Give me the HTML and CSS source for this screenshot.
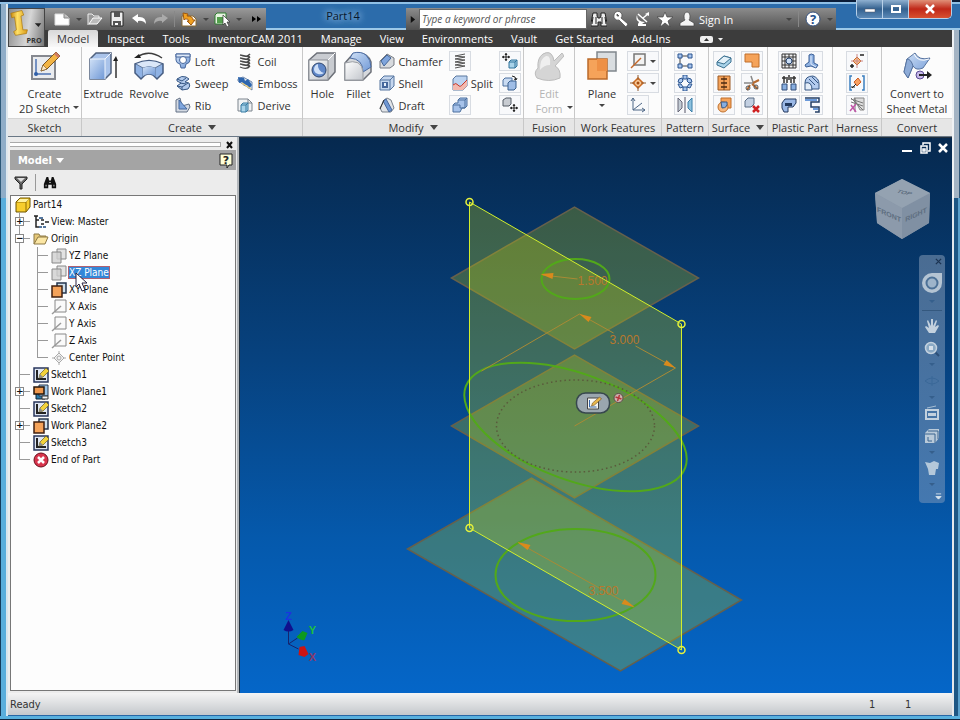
FILE: index.html
```html
<!DOCTYPE html>
<html lang="en">
<head>
<meta charset="utf-8">
<title>Part14</title>
<link rel="stylesheet" href="styles.css">
</head>
<body>
<svg class="defs" aria-hidden="true">
  <defs>
    <linearGradient id="blueFace" x1="0" y1="0" x2="1" y2="1"><stop offset="0" stop-color="#cfe0f6"/><stop offset="1" stop-color="#6f98d6"/></linearGradient>
    <linearGradient id="greyFace" x1="0" y1="0" x2="1" y2="1"><stop offset="0" stop-color="#ffffff"/><stop offset="1" stop-color="#c2c6cc"/></linearGradient>
    <linearGradient id="gold" x1="0" y1="0" x2="1" y2="0"><stop offset="0" stop-color="#c98a10"/><stop offset=".4" stop-color="#ffe066"/><stop offset="1" stop-color="#d99a18"/></linearGradient>

    <symbol id="sketch" viewBox="0 0 30 30"><path d="M2 5h23v23H2z" fill="#e9ebee" stroke="#85888f" stroke-width="2"/><path d="M6 8v15h15" fill="none" stroke="#4d74b4" stroke-width="1.5"/><circle cx="6" cy="23" r="2" fill="#2f5fa8"/><path d="M11 20l2-6L26 1l4 4-13 13z" fill="#f2b444" stroke="#7a5420"/><path d="M11 20l2-6 4 4z" fill="#fbe7c4" stroke="#7a5420" stroke-width=".6"/><path d="M24 3l2-2 4 4-2 2z" fill="#cf7a62"/></symbol>
    <symbol id="extrude" viewBox="0 0 30 30"><path d="M2 8l6-6h15v20l-6 6H2z" fill="#a9c3ea" stroke="#50617e" stroke-width="1.5"/><path d="M2 8h15v20H2z" fill="url(#blueFace)"/><path d="M2 8h15v20M17 8l6-6" fill="none" stroke="#eff5fd"/><path d="M28 27V9" stroke="#333" stroke-width="1.5"/><path d="M25 10l3-5 2 5z" fill="#222"/></symbol>
    <symbol id="revolve" viewBox="0 0 30 30"><path d="M3 6Q15-2 28 7" fill="none" stroke="#3c3c3c" stroke-width="1.500"/><path d="M0 7l5-4 2 4z" fill="#222"/><path d="M1 13q14-7 28 0v9l-6 6-4-4q-4-2-8 0l-4 4-6-6z" fill="#8fb2e4" stroke="#465c80" stroke-width="1.500"/><path d="M2 13q13-6 26 0l-7 4q-6-3-12 0z" fill="#dbe7f8"/><path d="M2 13l7 4q6-3 12 0l7-4M9 17v8M21 17v8" fill="none" stroke="#5f7699"/><path d="M9 17q6-3 12 0v8q-6-4-12 0z" fill="url(#blueFace)"/></symbol>
    <symbol id="hole" viewBox="0 0 30 30"><path d="M2 9l8-7h18v19l-7 8H2z" fill="#c9ccd1" stroke="#6c7078" stroke-width="1.5"/><path d="M2 9h19v20H2z" fill="url(#greyFace)" stroke="#8b8f96"/><path d="M21 9l7-7" stroke="#fff"/><circle cx="12" cy="19" r="7" fill="#5f87c8" stroke="#2f466e"/><path d="M7 18a6 5 0 0 0 10 4a8 8 0 0 1-6-9a6 6 0 0 0-4 5" fill="#cfe0f8"/></symbol>
    <symbol id="fillet" viewBox="0 0 30 30"><path d="M2 12L10 3q14-3 18 8v10l-8 8H2z" fill="#d6d9dd" stroke="#6c7078" stroke-width="1.5"/><path d="M10 2q8-2 13 2 5 5 5 12l-8 5q0-13-13-14z" fill="url(#blueFace)" stroke="#4a6ba3"/><path d="M2 12q17-5 18 9v8H2z" fill="url(#greyFace)" stroke="#9a9ea4"/></symbol>
    <symbol id="form" viewBox="0 0 30 30"><path d="M3 27q-4-5 1-10Q3 7 9 3q7-4 10 3l1 4 8-8 2 3-9 10q6 3 5 12-11 5-23 0z" fill="#d5d5d5" stroke="#bcbcbc"/><path d="M6 19q0-12 6-14 5-1 4 9-6 0-10 5" fill="#efefef"/></symbol>
    <symbol id="plane" viewBox="0 0 30 30"><path d="M10 1h19v19H10z" fill="#d9dde0" stroke="#80868c" stroke-width="1.5"/><path d="M1 8h19v20H1z" fill="#f5a35a" stroke="#b9692a" stroke-width="1.5"/><path d="M10 8h10v12H10z" fill="#ee9045"/></symbol>
    <symbol id="convert" viewBox="0 0 30 30"><path d="M2 21L5 8l8-6q4 8 15 5l-7 10q-7 3-10-2l-5 12z" fill="url(#blueFace)" stroke="#5874a0"/><path d="M2 21L5 8q4 0 6 7L6 27z" fill="#8eacd8" stroke="#5874a0"/><path d="M12 3q4 9 15 5" stroke="#fff" fill="none"/><circle cx="18" cy="24" r="4" fill="#c6b8e8" stroke="#5b4b94"/><path d="M17 24h9" stroke="#222" stroke-width="2"/><path d="M25 20l5 4-5 4z" fill="#222"/></symbol>

    <symbol id="loft" viewBox="0 0 16 16"><path d="M1 1h14v6q0 3-4 4l-1 4H6l-1-4Q1 10 1 7z" fill="url(#blueFace)" stroke="#46679c"/><path d="M1 1h14v3H1z" fill="#dce8f8" stroke="#46679c"/><circle cx="8" cy="7" r="3.500" fill="#fff" stroke="#46679c"/></symbol>
    <symbol id="sweep" viewBox="0 0 16 16"><path d="M2 4q5-4 9-2l3 2-4 3 4 1q2 3-1 6l-6 1-5-4 4-3-4-2z" fill="#b2caec" stroke="#365784"/><path d="M2 4l5 2 4-3M2 11l5 1 6-4M7 12v3M5 8l6 1" fill="none" stroke="#365784"/></symbol>
    <symbol id="rib" viewBox="0 0 16 16"><path d="M1 3l4-2 2 8 7-2 1 3-3 5H1z" fill="#d3d9e2" stroke="#627085"/><path d="M4 3v9h8z" fill="#7fa6de" stroke="#44699f"/></symbol>
    <symbol id="coil" viewBox="0 0 16 16"><path d="M3 2q7 3 10-1M3 5q7 3 10-1M3 8q7 3 10-1M3 11q7 3 10-1M3 14q7 3 10-1M3 2l10 2M3 5l10 2M3 8l10 2M3 11l10 2" fill="none" stroke="#4a4a4a" stroke-width="1.300"/></symbol>
    <symbol id="emboss" viewBox="0 0 16 16"><path d="M1 4l5-2 9 5v8L1 6z" fill="#dde7f4" stroke="#7088aa"/><path d="M1 2l6 1 1 3 3-2 4 6-3 4-2-4-3 1-2-4-3 1z" fill="#2e66ae"/><path d="M5 8l9 6" stroke="#f0d07c" stroke-width="1.500"/></symbol>
    <symbol id="derive" viewBox="0 0 16 16"><path d="M1 2h10l4 4v8H1z" fill="#f0f2f4" stroke="#7d858e"/><path d="M11 2v4h4" fill="none" stroke="#7d858e"/><path d="M4 8l2-2h5v7l-2 2H4z" fill="#a9d3ea" stroke="#377ba2"/><path d="M4 8h5v7M9 8l2-2" fill="none" stroke="#377ba2"/></symbol>
    <symbol id="chamfer" viewBox="0 0 16 16"><path d="M1 8l7-7 7 4v7l-4 3H1z" fill="#d7dade" stroke="#767b83"/><path d="M2 8l6-6 4 3-7 8z" fill="#7ea4dc" stroke="#446699"/></symbol>
    <symbol id="shell" viewBox="0 0 16 16"><path d="M1 5l4-4h10v10l-4 4H1z" fill="#c5d6ee" stroke="#55759f"/><path d="M1 5h10v10M11 5l4-4" fill="none" stroke="#55759f"/><path d="M3 7h6v6H3z" fill="#46679c"/><path d="M5 8h2v3H5z" fill="#e7f0fb"/></symbol>
    <symbol id="draft" viewBox="0 0 16 16"><path d="M1 11l4-8 3-2 4 2 3 8-3 4H3z" fill="#e1e4e8" stroke="#79818b"/><path d="M4 4l3-2 6 11-3 2z" fill="#7098d4" stroke="#46679c"/><path d="M1 12l4-9" stroke="#333"/></symbol>
    <symbol id="thread" viewBox="0 0 16 16"><path d="M3 3l10-2M3 6l10-2M3 9l10-2M3 12l10-2M3 15l10-2M3 3l10 1M3 6l10 1M3 9l10 1M3 12l10 1" fill="none" stroke="#555"/></symbol>
    <symbol id="split" viewBox="0 0 16 16"><path d="M1 4l3-3h11v10l-4 4H1z" fill="#bcd3f0" stroke="#5a789f"/><path d="M1 10q3-3 5 0t5-1l4-4v6l-4 4H1z" fill="#f4b9ae"/><path d="M1 10q3-3 5 0t5-1l4-4" fill="none" stroke="#c5392c"/></symbol>
    <symbol id="combine" viewBox="0 0 16 16"><path d="M6 3l2-2h7v8l-2 2h-3l-2 4H1V8l2-2h3z" fill="#a6c2ea" stroke="#4c709f"/><path d="M6 3h7v8H8V8H1M13 3l2-2" fill="none" stroke="#4c709f"/></symbol>
    <symbol id="movebody" viewBox="0 0 16 16"><path d="M4 0v8M0 4h8" stroke="#222"/><path d="M2.500 2L4 0l1.500 2zM2.500 6L4 8l1.500-2zM2 2.500L0 4l2 1.500zM6 2.500L8 4 6 5.500z" fill="#222"/><path d="M7 9l2-2h6v6l-2 2H7z" fill="#a9d3ea" stroke="#32749c"/><path d="M7 9h6v6M13 9l2-2" fill="none" stroke="#32749c"/></symbol>
    <symbol id="copybody" viewBox="0 0 16 16"><path d="M1 5l2-2h7v8H1z" fill="#c9dbf2" stroke="#4c709f"/><path d="M6 8l2-2h6v7l-2 2H6z" fill="#9fbde6" stroke="#3a608f"/><path d="M10 1q4 0 4 4l-2-1M14 5l1-2" fill="none" stroke="#222"/></symbol>
    <symbol id="movepart" viewBox="0 0 16 16"><path d="M1 3l3-2h5v6L7 9H1z" fill="#c8ccd2" stroke="#555c66"/><path d="M12 7v8M8 11h8" stroke="#222"/><path d="M10.500 9L12 7l1.500 2zM10.500 13l1.500 2 1.500-2zM10 9.500L8 11l2 1.500zM14 9.500l2 1.500-2 1.500z" fill="#222"/></symbol>

    <symbol id="axis" viewBox="0 0 16 16"><path d="M4 1h11v11H4z" fill="#f2f2f2" stroke="#777" stroke-width="1.500"/><path d="M1 15L11 5" stroke="#c4682a" stroke-width="1.500"/></symbol>
    <symbol id="point" viewBox="0 0 16 16"><path d="M8 3l5 5-5 5-5-5z" fill="#f9c896" stroke="#cc6b22" stroke-width="1.500"/><path d="M8 0v5M8 11v5M0 8h5M11 8h5" stroke="#8f5a30"/><circle cx="8" cy="8" r="1.500" fill="#a44c10"/></symbol>
    <symbol id="ucs" viewBox="0 0 16 16"><path d="M3 1v12h12M3 13l9-7" fill="none" stroke="#4d6686"/><path d="M1 4l2-3 2 3M12 11l3 2-3 2" fill="none" stroke="#4d6686"/></symbol>
    <symbol id="rect" viewBox="0 0 16 16"><path d="M5 3h6M5 13h6M3 5v6" stroke="#444"/><path d="M1 1h4v4H1zM11 1h4v4h-4zM1 11h4v4H1zM11 11h4v4h-4z" fill="#a9c6ee" stroke="#2b5590"/></symbol>
    <symbol id="circ" viewBox="0 0 16 16"><g fill="#a9c6ee" stroke="#2b5590"><path d="M6 0h4v4H6zM11 3l3 1 1 3-3 1-2-2zM2 4l3-1 1 3-2 2-3-1zM1 9l3 0 2 3-3 1zM15 9l-3 0-2 3 3 1zM6 12h4v4H6z"/></g></symbol>
    <symbol id="mirror" viewBox="0 0 16 16"><path d="M1 1l4 4v6l-4 4z" fill="#c3ccd5" stroke="#667"/><path d="M15 1l-4 4v6l4 4z" fill="#8ec1de" stroke="#3a7fa8"/><path d="M8 0v16" stroke="#556"/></symbol>
    <symbol id="thicken" viewBox="0 0 16 16"><path d="M1 9l7-6 7 2v4l-7 6-7-3z" fill="#a9d3ea" stroke="#3b7191"/><path d="M1 9l7-6 7 2-7 6z" fill="#e3f1f9" stroke="#3b7191"/></symbol>
    <symbol id="patch" viewBox="0 0 16 16"><path d="M1 1h14v13H8V9H1z" fill="#f5a35a" stroke="#c06f2a"/></symbol>
    <symbol id="stitch" viewBox="0 0 16 16"><path d="M2 1h12v14H2z" fill="#f5a35a" stroke="#9c5a24"/><path d="M8 1v14" stroke="#7a3f12"/><path d="M5 4h6M5 8h6M5 12h6" stroke="#4a2a12" stroke-width="1.500"/></symbol>
    <symbol id="trim" viewBox="0 0 16 16"><path d="M0 8h9M7 1l3 9" stroke="#888" stroke-width="1.500"/><path d="M9 8l6-3M8 9l6 5M6 10l-3 5" stroke="#b66a30" stroke-width="2"/><circle cx="12" cy="12" r="2" fill="none" stroke="#555"/><circle cx="4" cy="13" r="2" fill="none" stroke="#555"/></symbol>
    <symbol id="sculpt" viewBox="0 0 16 16"><path d="M5 1h10v10H5z" fill="#f5a35a" stroke="#c06f2a"/><circle cx="7" cy="10" r="5" fill="#f7b87e" stroke="#c0702a"/><path d="M5 5h6q1 6-5 6z" fill="#87aee0" stroke="#365784"/></symbol>
    <symbol id="delface" viewBox="0 0 16 16"><path d="M1 4l3-3h6v6l-3 3H1z" fill="#c3d0e2" stroke="#5b6c84"/><path d="M9 9l6 6M15 9l-6 6" stroke="#cf2121" stroke-width="2.500"/></symbol>
    <symbol id="grill" viewBox="0 0 16 16"><path d="M1 1h14v14H1z" fill="#f2f2f2" stroke="#333"/><path d="M4 1v14M8 1v14M12 1v14M1 4h14M1 8h14M1 12h14" stroke="#333"/><circle cx="8" cy="8" r="3" fill="#cde0f6" stroke="#233e68"/></symbol>
    <symbol id="boss" viewBox="0 0 16 16"><path d="M5 2q2-2 5 0v8l4 2-2 3-5-2-5 1-1-2 4-3z" fill="#8fb2e2" stroke="#3a5f96"/><path d="M7 3v8l5 3" fill="none" stroke="#dfeafa"/></symbol>
    <symbol id="snap" viewBox="0 0 16 16"><path d="M1 9h5v6H1zM10 9h5v6h-5z" fill="#87aee0" stroke="#334f7b"/><path d="M3 1v7M6 2v6M10 2v6M13 1v7M1 3h4M11 3h4M8 0v5" stroke="#333" stroke-width="1.500"/></symbol>
    <symbol id="rest" viewBox="0 0 16 16"><path d="M1 8q0-7 8-7 6 2 6 8v5H7z" fill="#b3cbee" stroke="#365784"/><path d="M1 8q7-2 7 7H1zM5 4l6 6M8 2l6 6" fill="#e4edf8" stroke="#365784"/></symbol>
    <symbol id="rulefillet" viewBox="0 0 16 16"><path d="M1 6l3-4h11v4l-3 4H7v5H3L1 11z" fill="#9ab8e6" stroke="#22395e"/><path d="M4 6h7v3H4z" fill="#22395e"/></symbol>
    <symbol id="lip" viewBox="0 0 16 16"><path d="M1 1h14v4H7v5h8v5h-4" fill="none" stroke="#243f66" stroke-width="1.500"/><path d="M1 3h12M9 12h5" stroke="#6b9ada" stroke-width="2"/></symbol>
    <symbol id="pin1" viewBox="0 0 16 16"><path d="M8 4l4 4-4 4-4-4z" fill="#f9c08c" stroke="#cc6b22"/><path d="M8 1v14M2 8h12" stroke="#c88"/><path d="M11 2h4M1 13h4M3 11v4" stroke="#222" stroke-width="1.500"/></symbol>
    <symbol id="pin2" viewBox="0 0 16 16"><path d="M3 1H1v14h2M13 1h2v14h-2" fill="none" stroke="#3a7fc0" stroke-width="1.500"/><path d="M9 3l3 4-4 4-3-4z" fill="#f9a060" stroke="#cc5b22"/><path d="M3 13l4-4M2 12h4" stroke="#222"/></symbol>
    <symbol id="pin3" viewBox="0 0 16 16"><path d="M5 1h10v12h-4z" fill="#ddd" stroke="#888"/><path d="M2 2l12 4M2 5l12 4M2 1l12 12M6 1v14" stroke="#777"/><path d="M1 14l6-7M2 8l5 7" stroke="#c057a8" stroke-width="1.500"/></symbol>

    <symbol id="new" viewBox="0 0 16 16"><path d="M1 3h9l5 4v7H1z" fill="#fff" stroke="#ddd"/><path d="M10 3v4h5" fill="#bbb" stroke="#888"/></symbol>
    <symbol id="open" viewBox="0 0 16 16"><path d="M1 14V3h4l2 2h5v2" fill="#999" stroke="#eee"/><path d="M2 13L6 7h9l-5 6z" fill="#bbb" stroke="#fff"/></symbol>
    <symbol id="save" viewBox="0 0 16 16"><path d="M2 1h12v14H2z" fill="#eee" stroke="#222"/><path d="M5 1h6v5H5zM4 10h8v5H4z" fill="#555"/><path d="M6 12h3v2H6z" fill="#fff"/></symbol>
    <symbol id="undo" viewBox="0 0 16 16"><path d="M1 7l6-4v3q8-1 8 7-3-4-8-3v2z"/></symbol>
    <symbol id="redo" viewBox="0 0 16 16"><path d="M15 7L9 3v3Q1 5 1 13q3-4 8-3v2z"/></symbol>
    <symbol id="ret" viewBox="0 0 16 16"><path d="M1 5h11l3 3v7H1z" fill="#fff" stroke="#8a6a30"/><path d="M2 2l5 1-1 2q6 0 6 4l2 0-4 5-4-4h2q-1-3-4-2L3 9z" fill="#f0a020" stroke="#a05a10"/></symbol>
    <symbol id="sel" viewBox="0 0 16 16"><path d="M1 4l2-2h9v9l-2 2H1z" fill="#e6f4e0" stroke="#2f7c30"/><path d="M3 6h6v6H3z" fill="#53a04c"/><path d="M9 4v10l2-2 2 4 2-1-2-4h3z" fill="#fff" stroke="#333" stroke-width=".7"/></symbol>
    <symbol id="bino" viewBox="0 0 16 16"><path d="M2 2h4v3l1 2h2l1-2V2h4l2 10v3H10v-4H7v4H0v-3z" fill="#eee" stroke="#222"/><path d="M2 6l-1 7M5 6v7M11 6v7M14 6l1 7" stroke="#222"/></symbol>
    <symbol id="key" viewBox="0 0 16 16"><path d="M1 4a4 4 0 1 1 7 3l7 6-2 3-7-7a4 4 0 0 1-5-5m3-1v2h2z" fill="#fff" stroke="#444" stroke-width=".7" fill-rule="evenodd"/></symbol>
    <symbol id="dish" viewBox="0 0 16 16"><path d="M2 4q0 7 8 7l-3 2h4v2H3v-2l1-2Q0 9 2 4z" fill="#fff"/><path d="M3 3l9 8M8 7l5-4" stroke="#fff" stroke-width="1.500"/><path d="M10 3l4-2v4z" fill="#fff"/></symbol>
    <symbol id="star" viewBox="0 0 16 16"><path d="M8 1l2 5h6l-5 4 2 6-5-4-5 4 2-6-5-4h6z" fill="#fff" stroke="#444" stroke-width=".7"/></symbol>
    <symbol id="user" viewBox="0 0 16 16"><path d="M5 5a3 4 0 1 1 6 0q0 3-1 4l5 3v3H1v-3l5-3Q5 8 5 5" fill="#f4f4f4" stroke="#444" stroke-width=".7"/></symbol>

    <symbol id="t-part" viewBox="0 0 16 16"><path d="M1 5l4-4h10v9l-4 5H1z" fill="#f7cd2c" stroke="#6b5200"/><path d="M1 5h10v10M11 5l4-4" fill="none" stroke="#8f6c00"/><path d="M2 5l3-3h9l-3 3z" fill="#fff2a0"/></symbol>
    <symbol id="t-view" viewBox="0 0 16 16"><path d="M1 2h4M3 2v11h3M3 6h3M8 6h3M8 10h3M12 8h4" fill="none" stroke="#222" stroke-width="1.500"/><path d="M6 4h4M6 13h3M10 13h3" stroke="#55779f" stroke-width="2"/></symbol>
    <symbol id="t-folder" viewBox="0 0 16 16"><path d="M1 13V3h5l1 2h6v2" fill="#e6c878" stroke="#8c7844"/><path d="M1 13L5 6h10l-3 7z" fill="#fbe6a4" stroke="#8c7844"/></symbol>
    <symbol id="t-plane" viewBox="0 0 16 16"><path d="M6 1h9v10H6z" fill="#e2e2e2" stroke="#888"/><path d="M1 4h9v11H1z" fill="#cfcfcf" fill-opacity=".8" stroke="#888"/></symbol>
    <symbol id="t-planeo" viewBox="0 0 16 16"><path d="M6 1h9v10H6z" fill="#cfe0ec" stroke="#26364e" stroke-width="1.500"/><path d="M1 4h10v11H1z" fill="#f5a35a" stroke="#402010" stroke-width="1.500"/></symbol>
    <symbol id="t-planeb" viewBox="0 0 16 16"><path d="M3 7h9v8H3z" fill="#2a7aa8" stroke="#123"/><path d="M6 1h9v11H6z" fill="#9cc4e6" stroke="#26364e"/><path d="M1 3h10v7H1z" fill="#f0984c" stroke="#241408" stroke-width="1.500"/><path d="M9 12h6v3H9z" fill="#f4f4f4" stroke="#333"/></symbol>
    <symbol id="t-axis" viewBox="0 0 16 16"><path d="M4 1h11v12H4z" fill="#fafafa" stroke="#888"/><path d="M1 15l9-8" stroke="#999" stroke-width="1.500"/></symbol>
    <symbol id="t-point" viewBox="0 0 16 16"><path d="M8 3l5 5-5 5-5-5z" fill="#f2f2f2" stroke="#aaa"/><path d="M8 1v3M8 12v3M1 8h3M12 8h3" stroke="#aaa"/><circle cx="8" cy="8" r="2" fill="none" stroke="#aaa"/></symbol>
    <symbol id="t-sketch" viewBox="0 0 16 16"><path d="M1 1h14v14H1z" fill="#dfe6f2" stroke="#28365c" stroke-width="1.500"/><path d="M4 3v9h9" fill="none" stroke="#222" stroke-width="2"/><path d="M6 11l1-4 6-6 3 3-6 6z" fill="#f2d23c" stroke="#695a20" stroke-width=".7"/><path d="M6 11l1-4 3 3z" fill="#8a8a8a"/></symbol>
    <symbol id="t-end" viewBox="0 0 16 16"><circle cx="8" cy="8" r="7" fill="#d8344c" stroke="#6a0f1c"/><path d="M5 5l6 6M11 5l-6 6" stroke="#fff" stroke-width="2.500"/></symbol>
  </defs>
</svg>

<div class="window">
  <header class="top">
    <button class="app" aria-label="Application menu">
      <svg viewBox="0 0 38 39"><path d="M2 4l12-3 2 5-3 1 2 15 5 0-1 4-12 2-2-4 3-2L6 8 3 9z" fill="url(#gold)" stroke="#a87408" stroke-width=".7"/><path d="M28 15h7l-3 4z" fill="#222"/><text x="19" y="36" class="pro">PRO</text></svg>
    </button>
    <div class="titlebar">
      <div class="quick">
        <button aria-label="New"><svg><use href="#new"/></svg></button><i class="dd"></i>
        <button aria-label="Open"><svg><use href="#open"/></svg></button>
        <button aria-label="Save"><svg><use href="#save"/></svg></button>
        <button aria-label="Undo" class="light"><svg><use href="#undo"/></svg></button>
        <button aria-label="Redo" class="dim"><svg><use href="#redo"/></svg></button>
        <i class="vsep"></i>
        <button aria-label="Return"><svg><use href="#ret"/></svg></button><i class="dd"></i>
        <button aria-label="Select"><svg><use href="#sel"/></svg></button><i class="dd"></i>
        <button aria-label="More" class="more"><svg viewBox="0 0 16 16"><path d="M4 5l4 3-4 3zM9 5l4 3-4 3z"/></svg></button>
      </div>
      <h1>Part14</h1>
      <div class="info">
        <button aria-label="Collapse search" class="fold"><svg viewBox="0 0 8 8"><path d="M2 0l5 4-5 4z"/></svg></button>
        <input type="text" aria-label="Search help" placeholder="Type a keyword or phrase">
        <button aria-label="Search"><svg><use href="#bino"/></svg></button>
        <button aria-label="Subscription"><svg><use href="#key"/></svg></button>
        <button aria-label="Communication"><svg><use href="#dish"/></svg></button>
        <button aria-label="Favorites"><svg><use href="#star"/></svg></button>
        <button class="sign"><svg><use href="#user"/></svg>Sign In</button>
        <i class="dd"></i><i class="vsep"></i>
        <button aria-label="Help"><svg viewBox="0 0 16 16"><circle cx="8" cy="8" r="7" fill="#fff" stroke="#35507c"/><text x="8" y="13" text-anchor="middle" class="q">?</text></svg></button><i class="dd"></i>
      </div>
      <div class="winbtns">
        <button aria-label="Minimize"><svg viewBox="0 0 12 10"><path d="M1 5h10v3H1z" fill="#fff" stroke="#556" stroke-width=".5"/></svg></button>
        <button aria-label="Maximize"><svg viewBox="0 0 12 10"><path d="M2 2h8v6H2z" fill="none" stroke="#fff" stroke-width="2"/></svg></button>
        <button aria-label="Close" class="close"><svg viewBox="0 0 12 10"><path d="M2 1l8 8M10 1L2 9" stroke="#fff" stroke-width="2.500"/></svg></button>
      </div>
    </div>
    <nav class="tabs">
      <a href="#" class="on">Model</a><a href="#">Inspect</a><a href="#">Tools</a><a href="#">InventorCAM 2011</a><a href="#">Manage</a><a href="#">View</a><a href="#">Environments</a><a href="#">Vault</a><a href="#">Get Started</a><a href="#">Add-Ins</a>
      <button aria-label="Minimize ribbon"><svg viewBox="0 0 24 8"><rect x="0" y="1" width="13" height="7" rx="2" fill="#eee"/><path d="M4 6l2.500-3L9 6z" fill="#333"/><path d="M18 3h5l-2.500 3z" fill="#eee"/></svg></button>
    </nav>
  </header>

  <section class="ribbon" aria-label="Ribbon">
    <div class="panel"><div class="body">
      <button class="big"><svg><use href="#sketch"/></svg><span>Create<br>2D Sketch</span><i class="dd side"></i></button>
    </div><h2>Sketch</h2></div>
    <div class="panel"><div class="body">
      <button class="big"><svg><use href="#extrude"/></svg><span>Extrude</span></button>
      <button class="big"><svg><use href="#revolve"/></svg><span>Revolve</span></button>
      <div class="col">
        <button class="small"><svg><use href="#loft"/></svg>Loft</button>
        <button class="small"><svg><use href="#sweep"/></svg>Sweep</button>
        <button class="small"><svg><use href="#rib"/></svg>Rib</button>
      </div>
      <div class="col">
        <button class="small"><svg><use href="#coil"/></svg>Coil</button>
        <button class="small"><svg><use href="#emboss"/></svg>Emboss</button>
        <button class="small"><svg><use href="#derive"/></svg>Derive</button>
      </div>
    </div><h2>Create <i class="arrow"></i></h2></div>
    <div class="panel snug"><div class="body">
      <button class="big"><svg><use href="#hole"/></svg><span>Hole</span></button>
      <button class="big"><svg><use href="#fillet"/></svg><span>Fillet</span></button>
      <div class="col">
        <button class="small"><svg><use href="#chamfer"/></svg>Chamfer</button>
        <button class="small"><svg><use href="#shell"/></svg>Shell</button>
        <button class="small"><svg><use href="#draft"/></svg>Draft</button>
      </div>
      <div class="col">
        <button class="box" aria-label="Thread"><svg><use href="#thread"/></svg></button>
        <button class="small inset"><svg><use href="#split"/></svg>Split</button>
        <button class="box" aria-label="Combine"><svg><use href="#combine"/></svg></button>
      </div>
      <div class="col">
        <button class="box" aria-label="Move face"><svg><use href="#movebody"/></svg></button>
        <button class="box" aria-label="Copy object"><svg><use href="#copybody"/></svg></button>
        <button class="box" aria-label="Move bodies"><svg><use href="#movepart"/></svg></button>
      </div>
    </div><h2>Modify <i class="arrow"></i></h2></div>
    <div class="panel"><div class="body">
      <button class="big off" disabled><svg><use href="#form"/></svg><span>Edit<br>Form</span><i class="dd side"></i></button>
    </div><h2>Fusion</h2></div>
    <div class="panel flush"><div class="body">
      <button class="big"><svg><use href="#plane"/></svg><span>Plane</span><i class="dd below"></i></button>
      <div class="col">
        <button class="box wide" aria-label="Axis"><svg><use href="#axis"/></svg><i class="dd"></i></button>
        <button class="box wide" aria-label="Point"><svg><use href="#point"/></svg><i class="dd"></i></button>
        <button class="box" aria-label="UCS"><svg><use href="#ucs"/></svg></button>
      </div>
    </div><h2>Work Features</h2></div>
    <div class="panel"><div class="body">
      <div class="col">
        <button class="box" aria-label="Rectangular"><svg><use href="#rect"/></svg></button>
        <button class="box" aria-label="Circular"><svg><use href="#circ"/></svg></button>
        <button class="box" aria-label="Mirror"><svg><use href="#mirror"/></svg></button>
      </div>
    </div><h2>Pattern</h2></div>
    <div class="panel"><div class="body">
      <div class="col">
        <button class="box" aria-label="Thicken"><svg><use href="#thicken"/></svg></button>
        <button class="box" aria-label="Stitch"><svg><use href="#stitch"/></svg></button>
        <button class="box" aria-label="Sculpt"><svg><use href="#sculpt"/></svg></button>
      </div>
      <div class="col">
        <button class="box" aria-label="Patch"><svg><use href="#patch"/></svg></button>
        <button class="box" aria-label="Trim"><svg><use href="#trim"/></svg></button>
        <button class="box" aria-label="Delete face"><svg><use href="#delface"/></svg></button>
      </div>
    </div><h2>Surface <i class="arrow"></i></h2></div>
    <div class="panel tight"><div class="body">
      <div class="col">
        <button class="box" aria-label="Grill"><svg><use href="#grill"/></svg></button>
        <button class="box" aria-label="Snap fit"><svg><use href="#snap"/></svg></button>
        <button class="box" aria-label="Rule fillet"><svg><use href="#rulefillet"/></svg></button>
      </div>
      <div class="col">
        <button class="box" aria-label="Boss"><svg><use href="#boss"/></svg></button>
        <button class="box" aria-label="Rest"><svg><use href="#rest"/></svg></button>
        <button class="box" aria-label="Lip"><svg><use href="#lip"/></svg></button>
      </div>
    </div><h2>Plastic Part</h2></div>
    <div class="panel"><div class="body">
      <div class="col">
        <button class="box" aria-label="Pin"><svg><use href="#pin1"/></svg></button>
        <button class="box" aria-label="Pin group"><svg><use href="#pin2"/></svg></button>
        <button class="box" aria-label="Properties"><svg><use href="#pin3"/></svg></button>
      </div>
    </div><h2>Harness</h2></div>
    <div class="panel"><div class="body">
      <button class="big"><svg><use href="#convert"/></svg><span>Convert to<br>Sheet Metal</span></button>
    </div><h2>Convert</h2></div>
  </section>

  <main class="work">
    <aside class="browser">
      <div class="grip"><i></i><button aria-label="Close panel"><svg viewBox="0 0 8 8"><path d="M1 1l5 6M6 1L1 7" stroke="#111" stroke-width="2"/></svg></button></div>
      <div class="bhead"><button class="btitle">Model<i class="arrow"></i></button>
        <button class="help" aria-label="Help"><svg viewBox="0 0 14 15"><path d="M1 1h12v11H10l-2 3v-3H1z" fill="#ffffd8" stroke="#222"/><text x="7" y="11" text-anchor="middle" class="hq">?</text></svg></button></div>
      <div class="btools">
        <button aria-label="Filter"><svg viewBox="0 0 14 14"><path d="M1 1h12v2L8 8v5H6V8L1 3z" fill="#666" stroke="#222"/><path d="M3 2h8L7 6z" fill="#ddd"/></svg></button>
        <i></i>
        <button aria-label="Find"><svg viewBox="0 0 16 14"><path d="M4 0h2l1 4h2l1-4h2l3 8v5h-5V9H6v4H1V8z" fill="#111"/><path d="M3 9h1v2H3zM12 9h1v2h-1zM7 6h2v1H7z" fill="#ddd"/></svg></button>
      </div>
      <div class="tree">
        <div class="row root"><svg><use href="#t-part"/></svg><span>Part14</span></div>
        <ul>
          <li><button class="exp" aria-label="Expand">+</button><div class="row"><svg><use href="#t-view"/></svg><span>View: Master</span></div></li>
          <li><button class="exp" aria-label="Collapse">−</button><div class="row"><svg><use href="#t-folder"/></svg><span>Origin</span></div>
            <ul>
              <li><div class="row"><svg><use href="#t-plane"/></svg><span>YZ Plane</span></div></li>
              <li><div class="row picked"><svg><use href="#t-plane"/></svg><span>XZ Plane</span><svg class="cursor" viewBox="0 0 14 20"><path d="M1 1v14l3-3 3 7 3-1-3-7h5z" fill="#fff" stroke="#2a2340"/></svg></div></li>
              <li><div class="row"><svg><use href="#t-planeo"/></svg><span>XY Plane</span></div></li>
              <li><div class="row"><svg><use href="#t-axis"/></svg><span>X Axis</span></div></li>
              <li><div class="row"><svg><use href="#t-axis"/></svg><span>Y Axis</span></div></li>
              <li><div class="row"><svg><use href="#t-axis"/></svg><span>Z Axis</span></div></li>
              <li><div class="row"><svg><use href="#t-point"/></svg><span>Center Point</span></div></li>
            </ul></li>
          <li><div class="row"><svg><use href="#t-sketch"/></svg><span>Sketch1</span></div></li>
          <li><button class="exp" aria-label="Expand">+</button><div class="row"><svg><use href="#t-planeb"/></svg><span>Work Plane1</span></div></li>
          <li><div class="row"><svg><use href="#t-sketch"/></svg><span>Sketch2</span></div></li>
          <li><button class="exp" aria-label="Expand">+</button><div class="row"><svg><use href="#t-planeo"/></svg><span>Work Plane2</span></div></li>
          <li><div class="row"><svg><use href="#t-sketch"/></svg><span>Sketch3</span></div></li>
          <li><div class="row"><svg><use href="#t-end"/></svg><span>End of Part</span></div></li>
        </ul>
      </div>
    </aside>

    <div class="canvas">
      <svg class="scene" viewBox="241 138 711 555" preserveAspectRatio="xMidYMid meet">
        <g fill="#d0d400" fill-opacity=".26" stroke="#66604c" stroke-width="1.500">
          <path d="M408 549L532 478L742 600L621 671z"/>
          <path d="M452 426L575 355L699 426L575 498z"/>
          <path d="M452 278L575 207L699 278L575 349z"/>
        </g>
        <path d="M470 202L682 324V650L470 528z" fill="#ccdc10" fill-opacity=".28"/>
        <g fill="none" stroke="#52a81a" stroke-width="2">
          <ellipse cx="576" cy="279" rx="34" ry="20"/>
          <ellipse cx="576" cy="427" rx="117" ry="53" transform="rotate(20.400 576 427)"/>
          <ellipse cx="576" cy="575" rx="80" ry="46"/>
        </g>
        <ellipse cx="576" cy="426" rx="79" ry="46" fill="none" stroke="#5a5a3c" stroke-width="1.500" stroke-dasharray="1.500 3"/>
        <g fill="none" stroke="#a98a35">
          <path d="M482 371L580 314L614 333M636 346L676 368L575 426M519 543L634 607M543 275L578 279"/>
        </g>
        <path d="M541 274l13-1-1 6zM580 314l12 3-3 5zM676 368l-12-3 3-5zM518 542l13 3-3 5zM635 607l-13-3 3-5z" fill="#d98a1c"/>
        <g class="dims" text-anchor="middle"><text x="593" y="285">1.500</text><text x="625" y="344">3.000</text><text x="604" y="595">3.500</text></g>
        <path d="M470 202L682 324V650L470 528z" fill="none" stroke="#d2ee2c"/>
        <g fill="none" stroke="#e6f23c" stroke-width="1.500"><circle cx="470" cy="202" r="3.500"/><circle cx="682" cy="324" r="3.500"/><circle cx="682" cy="650" r="3.500"/><circle cx="470" cy="528" r="3.500"/></g>
        <rect x="577" y="393" width="33" height="20" rx="9" fill="#9aa6ae" stroke="#37474e" stroke-width="1.500"/>
        <path d="M588 398h11v11h-11z" fill="#f6f6f2" stroke="#444"/><path d="M590 400v7h7" fill="none" stroke="#3766a8"/><path d="M592 406l1-3 7-6 2 2-7 6z" fill="#e9b84c" stroke="#6b4a20" stroke-width=".6"/>
        <circle cx="619" cy="398" r="4.500" fill="#cdb4ae" stroke="#5b4b48"/><path d="M616 397l6 2M618 401l2-6" stroke="#b8353c" stroke-width="1.500"/>
        <path d="M289 628v16l10 5M289 644l9-6" fill="none" stroke="#16246e"/>
        <path d="M284 630l5-10 5 10q-5 3-10 0z" fill="#10108c"/><path d="M297 637l6-6 5 2-3 7q-4 1-8-3z" fill="#0d9a20"/><path d="M299 655l1-8 5-1 4 8-4 3z" fill="#cc1414"/>
        <g class="axes" text-anchor="middle"><text x="289" y="620" fill="#1c34e0">Z</text><text x="313" y="634" fill="#1fc03c">Y</text><text x="313" y="661" fill="#8a3a6c">X</text></g>
      </svg>
      <div class="docbtns">
        <button aria-label="Minimize view"><svg viewBox="0 0 12 12"><path d="M1 8h10v2H1z" fill="#fff"/></svg></button>
        <button aria-label="Restore view"><svg viewBox="0 0 12 12"><path d="M4 3V1h7v8H9M2 4h6v7H2zM4 7h2v2H4z" fill="none" stroke="#fff" stroke-width="1.500"/></svg></button>
        <button aria-label="Close view"><svg viewBox="0 0 12 12"><path d="M2 2l8 8M10 2l-8 8" stroke="#fff" stroke-width="2.500"/></svg></button>
      </div>
      <svg class="cube" viewBox="0 0 58 62"><path d="M1 15L28 1l28 14-1 30-27 16L3 45z" fill="#8393a5"/><path d="M1 15l27 15v31L3 45z" fill="#8c9aab"/><path d="M56 15L28 30v31l27-16z" fill="#8090a3"/><path d="M1 15L28 1l28 14-28 15z" fill="#94a2b1"/><g class="facetext" text-anchor="middle"><text transform="matrix(1 .45 0 1 15 39)">FRONT</text><text transform="matrix(1 -.45 0 1 42 39)">RIGHT</text><text transform="matrix(1 .2 -.6 .6 29 16)">TOP</text></g></svg>
      <div class="navbar">
        <button class="nx" aria-label="Close"><svg viewBox="0 0 8 8"><path d="M1 1l6 6M7 1L1 7" stroke="#1c3452" stroke-width="1.500"/></svg></button>
        <button aria-label="Wheel"><svg class="wheel" viewBox="0 0 22 22"><path d="M11 1h10v10a10 10 0 1 1-10-10z" fill="#b4c4d3"/><circle cx="11" cy="11" r="5.500" fill="#9db4ca" stroke="#4c7197" stroke-width="2"/></svg></button>
        <i class="dd"></i>
        <hr>
        <button aria-label="Pan"><svg viewBox="0 0 16 16"><path d="M5 15L1 9l1-1 3 2-2-7 1-1 3 6V1h2v7l3-6 1 1-2 6 3-2 1 1-4 7z" fill="#c3d1de"/></svg></button>
        <button aria-label="Zoom"><svg viewBox="0 0 16 16"><path d="M10 10l5 5" stroke="#2c5078" stroke-width="2"/><circle cx="7" cy="7" r="5.500" fill="#8aa9c4" stroke="#c3d1de" stroke-width="1.500"/><path d="M5 5h4v4H5z" fill="#d6e0ea"/></svg></button>
        <i class="dd"></i>
        <button aria-label="Orbit"><svg viewBox="0 0 16 16"><path d="M8 3v10M1 8q7-6 14 0-7 6-14 0" fill="none" stroke="#3a6898"/></svg></button>
        <i class="dd"></i>
        <button aria-label="Look at"><svg viewBox="0 0 16 16"><path d="M2 5h12v9H2zM5 9h6v1H5z" fill="none" stroke="#c3d1de" stroke-width="2"/><path d="M3 3l9-2" stroke="#a8bfd4"/></svg></button>
        <button aria-label="Visual style"><svg viewBox="0 0 16 16"><path d="M5 1h10v9l-4 5H1V5z" fill="#b9cad9"/><path d="M1 6h10v9M4 3h10v8M4 9v4h4" fill="none" stroke="#3b6490"/></svg></button>
        <i class="dd"></i>
        <button aria-label="Display"><svg viewBox="0 0 16 16"><path d="M1 2l5 1 4-2 5 2-1 6H4zM4 9h8l-1 6H5z" fill="#b4c8da"/></svg></button>
        <i class="dd"></i>
        <button class="nmenu" aria-label="Options"><svg viewBox="0 0 8 8"><path d="M1 1h6M1 4h6l-3 3z" stroke="#d8e4ee" fill="#d8e4ee"/></svg></button>
      </div>
    </div>
  </main>

  <footer class="status"><span>Ready</span><span class="n">1</span><span class="n">1</span></footer>
</div>
</body>
</html>
```
FILE: styles.css
```css
* { box-sizing: border-box; }
html, body { height: 100%; }
body { margin: 0; font-family: "Open Sans", "Noto Sans", sans-serif; font-size: 11px; color: #333; }
button { font: inherit; color: inherit; background: none; border: 0; padding: 0; margin: 0; }
svg { display: block; flex: none; }
i { font-style: normal; }
h1, h2 { margin: 0; font-weight: 400; font-size: 11px; }
ul { margin: 0; padding: 0; list-style: none; }
.defs { position: absolute; width: 0; height: 0; }

.window {
  min-height: 100vh; display: flex; flex-direction: column;
  padding: 0 8px 5px;
  background:
    linear-gradient(#0a1c38 0 2px, #8fc0e6 2px 4px, transparent 4px) top / 100% 8px no-repeat,
    linear-gradient(transparent 0 1px, #58b0de 1px 4px, #0b2540 4px) bottom / 100% 5px no-repeat,
    linear-gradient(90deg, #2c5878 0 1px, #8fadc8 1px 6px, #dfe8ee 6px 8px) left top / 8px 198px no-repeat,
    linear-gradient(90deg, #f0f2f4 0 2px, #a4b4c4 2px 7px, #33597a 7px) right top / 8px 198px no-repeat,
    linear-gradient(90deg, #143c5c 0 1px, #5aaedc 1px 6px, #d8e6ee 6px 8px) left / 8px 100% no-repeat,
    linear-gradient(90deg, #e4e8ec 0 2px, #1d5684 2px 6px, #5aa0cc 6px) right / 8px 100% no-repeat,
    #2767a6;
}

.top { display: grid; grid-template-columns: 37px 1fr; grid-template-rows: 30px 17px; }
.app { grid-row: 1 / 3; margin-top: 8px; background: linear-gradient(100deg, #8a8a8a, #d6d6d6 55%, #777); border: 1px solid #444; }
.app svg { width: 100%; height: 100%; }
.pro { font: 700 8px "Open Sans", sans-serif; fill: #333; }
.titlebar { display: flex; align-items: flex-start; background: linear-gradient(#0a1c38 0 2px, #8fc0e6 2px 4px, #2c6cab 4px 28px, #9cc8e8 28px); margin-right: -8px; padding-right: 8px; }
.quick, .info { margin-top: 8px; height: 22px; display: flex; align-items: center; background: linear-gradient(#9a9a9a, #5c5c5c); }
.quick { width: 221px; padding: 0 2px 0 9px; justify-content: space-between; }
.quick svg, .info svg { width: 16px; height: 16px; }
.light { fill: #fff; }
.dim { fill: #aaa; }
.dd { display: block; flex: none; border: 3px solid transparent; border-top-color: #444; border-bottom: 0; width: 6px; height: 3px; }
.vsep { width: 1px; height: 16px; background: #888; }
.top h1 { flex: 1; text-align: center; margin-top: 8px; padding-left: 14px; line-height: 15px; color: #08182c; text-shadow: 0 0 6px #a8cdf0, 0 0 8px #a8cdf0; }
.info { width: 430px; gap: 6px; padding-right: 3px; background: linear-gradient(#8c8c8c, #505050); }
.info .fold { width: 13px; display: grid; place-items: center; margin-right: -6px; }
.info .fold svg { width: 7px; height: 7px; fill: #111; }
.info input { width: 168px; height: 20px; border: 1px solid #666; background: #fff; padding: 0 2px; font: italic 10px "Open Sans", sans-serif; margin-right: -2px; }
.info input::placeholder { color: #555; opacity: 1; }
.sign { display: flex; align-items: center; gap: 4px; color: #fff; margin-right: auto; }
.q { font: 700 13px "Open Sans", sans-serif; fill: #24508c; }
.winbtns { display: flex; margin-left: 20px; height: 19px; border: 1px solid #b8d0e8; border-top: 0; border-radius: 0 0 5px 5px; overflow: hidden; }
.winbtns button { width: 26px; display: grid; place-items: center; background: linear-gradient(#8fb0d0, #33608e 50%, #5c8ab8); border-right: 1px solid #b8d0e8; }
.winbtns svg { width: 12px; height: 10px; }
.winbtns .close { width: 42px; border: 0; background: linear-gradient(#e09078, #c02818 50%, #d85030); }

.tabs { display: flex; align-items: stretch; background: #3c3c3c; padding-left: 3px; }
.tabs a { padding: 0 9px; line-height: 18px; color: #fff; text-decoration: none; white-space: nowrap; font-weight: 500; }
.tabs .on { background: linear-gradient(#d8d8d8, #f8f8f8); color: #333; font-weight: 400; border-radius: 2px 2px 0 0; }
.tabs button { margin-left: 20px; }
.tabs button svg { width: 24px; height: 8px; }

.ribbon { display: grid; grid-template-columns: 74fr 221fr 221fr 51fr 87fr 47fr 59fr 65fr 49fr 70fr; background: #fcfcfc; border-bottom: 1px solid #6a7886; }
.panel { min-width: 0; border-right: 1px solid #c8c8c8; display: flex; flex-direction: column; }
.panel:last-child { border-right: 0; }
.body { height: 71px; display: flex; justify-content: center; gap: 6px; }
.panel h2 { height: 18px; line-height: 17px; background: #e6e6e6; border-top: 1px solid #d4d4d4; display: flex; justify-content: center; align-items: center; gap: 6px; white-space: nowrap; }
.arrow { display: block; border: 4px solid transparent; border-top: 5px solid #444; border-bottom: 0; }
.big { position: relative; display: flex; flex-direction: column; align-items: center; padding-top: 4px; line-height: 15px; text-align: center; white-space: nowrap; }
.big > svg { width: 30px; height: 30px; margin-bottom: 5px; }
.side { position: absolute; right: -9px; bottom: 9px; }
.below { margin-top: 3px; }
.off { color: #b4b4b4; }
.col { display: flex; flex-direction: column; align-items: flex-start; padding-top: 3px; }
.small { display: flex; align-items: center; gap: 4px; height: 22px; padding: 0 3px 0 0; white-space: nowrap; }
.small svg, .box svg { width: 16px; height: 16px; }
.snug .small { padding-right: 0; gap: 3px; }
.snug .inset { padding-left: 3px; }
.snug .body { justify-content: flex-end; padding-right: 2px; }
.box { height: 20px; margin: 1px 0; padding: 0 2px; display: flex; align-items: center; gap: 4px; border: 1px solid #d8dce2; background: #f8f9fb; }
.tight .body { gap: 1px; }
.flush .body { justify-content: flex-end; gap: 10px; padding-right: 2px; }

.work { flex: 1; display: grid; grid-template-columns: 231px 1fr; min-height: 0; }
.browser { background: #ececec; padding: 2px 1px 2px 2px; display: flex; flex-direction: column; border-right: 2px solid #b4b8bc; }
.grip { display: flex; align-items: center; height: 11px; gap: 5px; }
.grip i { flex: 1; height: 5px; border: 1px solid #aaa; border-left: 0; background: #fff; }
.grip svg { width: 8px; height: 8px; margin-right: 2px; }
.bhead { height: 20px; display: flex; justify-content: space-between; align-items: center; background: #a4a4a4; padding: 0 3px 0 8px; }
.btitle { display: flex; align-items: center; gap: 4px; color: #fff; font: 700 11px "DejaVu Sans Condensed", "DejaVu Sans", sans-serif; }
.btitle .arrow { border-top-color: #fff; }
.help svg { width: 14px; height: 15px; }
.hq { font: 700 11px "DejaVu Sans", sans-serif; fill: #222; }
.btools { height: 25px; display: flex; align-items: center; padding: 0 4px; gap: 7px; }
.btools i { width: 1px; height: 17px; background: #999; }
.btools svg { width: 14px; height: 14px; }
.tree { flex: 1; background: #fdfdfd; border: 1px solid #777; padding-left: 4px; font: 10px/17px "DejaVu Sans Condensed", "DejaVu Sans", sans-serif; color: #111; }
.row { position: relative; display: flex; align-items: center; gap: 2px; height: 17px; white-space: nowrap; }
.row > svg { width: 16px; height: 16px; }
.tree li { position: relative; padding-left: 18px; }
.tree li::before { content: ""; position: absolute; left: 4px; top: 0; bottom: 0; border-left: 1px solid #999; }
.tree li:last-child::before { bottom: auto; height: 9px; }
.tree li::after { content: ""; position: absolute; left: 5px; top: 8px; width: 10px; border-top: 1px solid #999; }
.exp { position: absolute; left: 0; top: 4px; width: 9px; height: 9px; border: 1px solid #888; background: #fff; z-index: 1; font: 700 9px/7px "DejaVu Sans", sans-serif; text-align: center; color: #111; }
.picked span { background: #3487d8; color: #fff; outline: 1px solid #b06070; outline-offset: -1px; padding: 0 1px; margin: 0 -1px; line-height: 13px; }
.row > .cursor { position: absolute; left: 24px; top: 8px; width: 14px; height: 20px; z-index: 2; }

.canvas { position: relative; overflow: hidden; border: 1px solid #20303f; border-width: 1px 0 0 1px; background: linear-gradient(#06294f, #07427f 40%, #0559ac 72%, #0566c8); }
.scene { position: absolute; inset: 0; width: 100%; height: 100%; }
.dims { font: 12px "Liberation Sans", sans-serif; fill: #b8782c; }
.axes { font: 700 11px "Liberation Sans", sans-serif; }
.docbtns { position: absolute; top: 4px; right: 3px; display: flex; gap: 6px; }
.docbtns svg { width: 12px; height: 12px; }
.cube { position: absolute; top: 40px; right: 20px; width: 58px; height: 62px; }
.facetext { font: 700 7px "Liberation Sans", sans-serif; fill: #5e6e80; }
.navbar { position: absolute; top: 117px; right: 7px; width: 26px; height: 248px; border-radius: 4px; background: linear-gradient(#4a6c92, #4478b0); display: flex; flex-direction: column; align-items: center; justify-content: space-between; padding: 3px 0; }
.navbar svg { width: 16px; height: 16px; }
.navbar .dd { border-top-color: #355f8c; }
.navbar .wheel { width: 22px; height: 22px; }
.navbar hr { width: 20px; margin: 0; border: 0; border-top: 1px solid #34587e; }
.navbar .nx, .navbar .nmenu { align-self: flex-end; margin-right: 3px; }
.navbar .nx svg, .navbar .nmenu svg { width: 7px; height: 7px; }

.status { height: 22px; display: flex; align-items: center; background: linear-gradient(#f4f4f4, #c4c8cc); font: 11px "DejaVu Sans Condensed", "DejaVu Sans", sans-serif; padding: 0 11px 0 2px; }
.status span:first-child { flex: 1; }
.status .n { width: 36px; }
```
